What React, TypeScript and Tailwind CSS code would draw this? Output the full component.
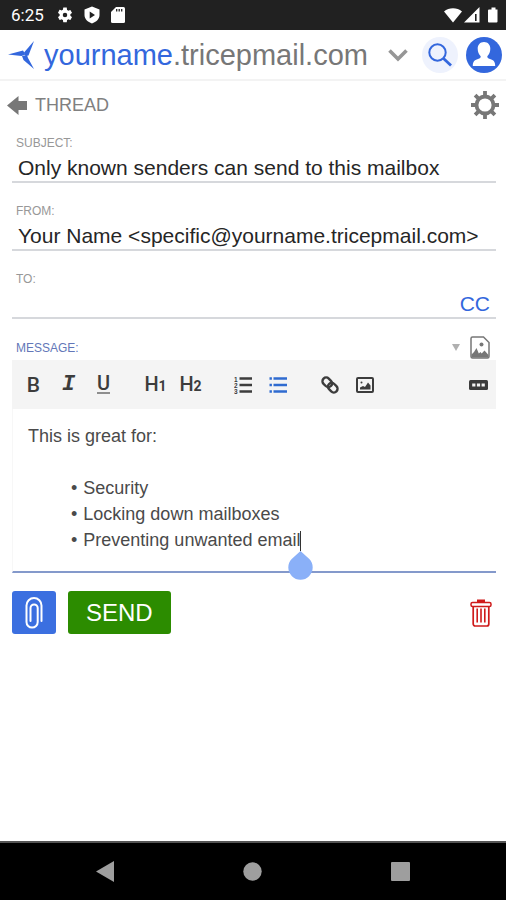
import React, { useState } from 'react';

interface FieldProps {
    id: string;
    label: string;
    value: string;
    onChange: (value: string) => void;
    children?: React.ReactNode;
}

const Field: React.FC<FieldProps> = ({ id, label, value, onChange, children }) => {
    return (
        <div>
            <label htmlFor={id} className="block h-4 pl-1 text-[12px] leading-4 text-[#989898]">{label}</label>
            <div className="flex h-8 items-center border-b-2 border-[#d6d8dc] pt-1">
                <input
                    id={id}
                    type="text"
                    value={value}
                    onChange={(e) => onChange(e.target.value)}
                    className="min-w-0 flex-1 bg-transparent pl-1.5 text-[21px] leading-7 text-[#262626] outline-none"
                />
                {children}
            </div>
        </div>
    );
};

interface ToolButtonProps {
    label: string;
    children: React.ReactNode;
}

const ToolButton: React.FC<ToolButtonProps> = ({ label, children }) => (
    <button type="button" aria-label={label} className="flex h-9 w-[35px] items-center justify-center text-[#3c3c3c]">
        {children}
    </button>
);

const StatusBar = () => (
    <div className="flex h-[30px] items-center bg-[#212121] pl-[11px] pr-2 text-white">
        <span className="font-[Roboto,sans-serif] text-[17px] leading-5">6:25</span>
        <div className="ml-3 flex items-center gap-2.5">
            <svg className="h-[18px] w-[18px]" viewBox="0 0 24 24" fill="currentColor">
                <path d="M19.14 12.94c.04-.3.06-.61.06-.94s-.02-.64-.07-.94l2.03-1.58a.49.49 0 0 0 .12-.61l-1.92-3.32a.49.49 0 0 0-.59-.22l-2.39.96a7 7 0 0 0-1.62-.94l-.36-2.54A.48.48 0 0 0 13.92 2h-3.84a.48.48 0 0 0-.47.41l-.36 2.54c-.59.24-1.13.57-1.62.94l-2.39-.96a.48.48 0 0 0-.59.22L2.74 8.87a.48.48 0 0 0 .12.61l2.03 1.58c-.05.3-.09.63-.09.94s.02.64.07.94l-2.03 1.58a.49.49 0 0 0-.12.61l1.92 3.32c.12.22.37.29.59.22l2.39-.96c.5.38 1.03.7 1.62.94l.36 2.54c.05.24.24.41.48.41h3.84c.24 0 .44-.17.47-.41l.36-2.54c.59-.24 1.13-.56 1.62-.94l2.39.96c.22.08.47 0 .59-.22l1.92-3.32a.48.48 0 0 0-.12-.61zM12 15a3 3 0 1 1 0-6 3 3 0 0 1 0 6z" />
            </svg>
            <svg className="h-[18px] w-4" viewBox="0 0 16 18" fillRule="evenodd" fill="currentColor">
                <path d="M8 .5l7.500 3v5.500c0 4-3.200 7-7.500 8.500C3.700 16 .5 13 .5 9V3.500zM5.700 5.500v7l5.300-3.500z" />
            </svg>
            <svg className="h-[18px] w-4" viewBox="0 0 16 18">
                <path d="M6 1h7.500A1.500 1.500 0 0 1 15 2.500v13a1.500 1.500 0 0 1-1.500 1.500h-11A1.500 1.500 0 0 1 1 15.500V6z" fill="currentColor" />
                <path d="M6.700 3v2.500M9.200 3v2.500M11.700 3v2.500" stroke="#212121" strokeWidth="1.300" />
            </svg>
        </div>
        <div className="ml-auto flex items-center gap-1.5">
            <svg className="h-4 w-[54px]" viewBox="0 0 54 16" fill="currentColor">
                <path d="M0 4.500C5 .300 13 .300 18 4.500L9 15.500z" />
                <path d="M35.500 0v15.500H20z" />
                <path d="M31.800 7v7" stroke="#212121" strokeWidth="1.600" />
                <path d="M45.500 2.500h2V.500h4v2h2v12a1 1 0 0 1-1 1h-7.500a1 1 0 0 1-1-1v-11a1 1 0 0 1 1-1z" />
            </svg>
        </div>
    </div>
);

const Header = () => (
    <header className="flex h-[51px] items-center border-b-2 border-[#f3f3f3] pl-2 pr-1">
        <svg className="h-7 w-7 shrink-0" viewBox="0 0 28 28" fill="#3367dd">
            <path d="M0 13.500L15 9.500l2.500 4-4 1.500z" />
            <path d="M26 0L20.500 14.500l-3 .5-1.500-3.500z" />
            <path d="M14 15l5-1 1 3L26 28 15.500 19z" />
        </svg>
        <h1 className="ml-2 text-[29px] leading-9 text-[#777]">
            <span className="text-[#3367dd]">yourname</span>.tricepmail.com
        </h1>
        <button type="button" aria-label="Switch mailbox" className="ml-auto mr-3.5 shrink-0">
            <svg className="h-4 w-5" viewBox="0 0 20 16" fill="none" stroke="#969696" strokeWidth="3.600">
                <path d="M1.500 3.500L10 12l8.500-8.500" />
            </svg>
        </button>
        <div className="flex shrink-0 gap-2">
            <button type="button" aria-label="Search" className="flex h-9 w-9 items-center justify-center rounded-full bg-[#eef2fd]">
                <svg className="h-6 w-6" viewBox="0 0 24 24" fill="none" stroke="#3367dd">
                    <circle cx="9.500" cy="9.500" r="8.200" strokeWidth="2" />
                    <path d="M15.500 15.500l7.500 7" strokeWidth="2.800" />
                </svg>
            </button>
            <button type="button" aria-label="Account" className="h-9 w-9">
                <svg className="h-9 w-9" viewBox="0 0 36 36">
                    <circle cx="18" cy="18" r="18" fill="#3367dd" />
                    <path d="M18 5c4 0 6.300 2.800 6.300 6.800 0 3-1.200 5.800-3 7.500 0 1.700.7 2.200 2.700 2.800 3.700 1 5.200 2.700 5.200 6.900H6.800c0-4.200 1.500-5.900 5.200-6.900 2-.6 2.700-1.100 2.700-2.800-1.800-1.700-3-4.500-3-7.500C11.700 7.800 14 5 18 5z" fill="#fff" />
                </svg>
            </button>
        </div>
    </header>
);

const Toolbar = () => (
    <div role="toolbar" aria-label="Formatting" className="flex h-[49px] items-center gap-[17px] bg-[#f4f4f4] pl-1">
        <div className="flex">
            <ToolButton label="Bold">
                <span className="font-[Roboto,sans-serif] text-[21px] leading-6 font-medium">B</span>
            </ToolButton>
            <ToolButton label="Italic">
                <span className="font-['Liberation_Mono',monospace] text-[22px] leading-6 font-bold italic">I</span>
            </ToolButton>
            <ToolButton label="Underline">
                <span className="border-b-2 border-[#8e8e8e] font-[Roboto,sans-serif] text-[20px] leading-[17px] font-medium">U</span>
            </ToolButton>
        </div>
        <div className="flex">
            <ToolButton label="Heading 1">
                <span className="flex items-baseline font-[Roboto,sans-serif] text-[20px] leading-6 font-medium">
                    H<span className="text-[14px] font-bold">1</span>
                </span>
            </ToolButton>
            <ToolButton label="Heading 2">
                <span className="flex items-baseline font-[Roboto,sans-serif] text-[20px] leading-6 font-medium">
                    H<span className="text-[14px] font-bold">2</span>
                </span>
            </ToolButton>
        </div>
        <div className="flex">
            <ToolButton label="Numbered list">
                <svg className="h-[18px] w-[18px]" viewBox="0 0 18 18" fill="currentColor">
                    <path d="M5.500 2.500H18M5.500 9H18M5.500 15.500H18" stroke="currentColor" strokeWidth="2.400" />
                    <text x="0" y="5.500" fontSize="6.500" fontWeight="bold">1</text>
                    <text x="0" y="11.500" fontSize="6.500" fontWeight="bold">2</text>
                    <text x="0" y="17.800" fontSize="6.500" fontWeight="bold">3</text>
                </svg>
            </ToolButton>
            <ToolButton label="Bulleted list">
                <svg className="h-[18px] w-[18px]" viewBox="0 0 18 18" stroke="#2f6bd0" strokeWidth="2.400">
                    <path d="M4.500 2.500H18M4.500 9H18M4.500 15.500H18M.500 2.500h2.400M.500 9h2.400M.500 15.500h2.400" />
                </svg>
            </ToolButton>
        </div>
        <div className="flex">
            <ToolButton label="Link">
                <svg className="h-[18px] w-[18px]" viewBox="0 0 18 18" fill="none" stroke="currentColor" strokeWidth="2.400">
                    <rect x="1" y="2.600" width="10.500" height="7.400" rx="3.700" transform="rotate(45 6.250 6.300)" />
                    <rect x="6.500" y="8" width="10.500" height="7.400" rx="3.700" transform="rotate(45 11.750 11.700)" />
                </svg>
            </ToolButton>
            <ToolButton label="Image">
                <svg className="h-[18px] w-[18px]" viewBox="0 0 18 18">
                    <rect x="1" y="2" width="16" height="14" rx="1" fill="none" stroke="currentColor" strokeWidth="2" />
                    <path d="M4 13.500v-2l3-1.500 2 1 3-4.500 2.500 3v4z" fill="currentColor" />
                    <circle cx="5.500" cy="6.500" r="1" fill="currentColor" />
                </svg>
            </ToolButton>
        </div>
        <div className="ml-auto flex">
            <ToolButton label="More">
                <svg className="h-[10px] w-[19px]" viewBox="0 0 19 10">
                    <rect width="19" height="10" rx="1.500" fill="currentColor" />
                    <path d="M3.200 3.500h3.200v3H3.200zM7.900 3.500h3.200v3H7.900zM12.600 3.500h3.200v3h-3.200z" fill="#f4f4f4" />
                </svg>
            </ToolButton>
        </div>
    </div>
);

const benefits = ['Security', 'Locking down mailboxes', 'Preventing unwanted email'];

const Editor = () => (
    <div
        role="textbox"
        aria-multiline="true"
        aria-labelledby="message-label"
        contentEditable
        suppressContentEditableWarning
        className="border-b-2 border-l border-b-[#8499cb] border-l-[#f7f7f7] px-[15px] pt-3.5 pb-[18px] text-[18px] leading-[26px] text-[#4a4a4a] outline-none"
    >
        <p>This is great for:</p>
        <p><br /></p>
        <ul className="pl-[43px]">
            {benefits.map((item, i) => (
                <li key={item} className="flex gap-1.5">
                    <span>•</span>
                    <span className="relative">
                        {item}
                        {i === benefits.length - 1 && (
                            <span contentEditable={false} className="absolute top-1 left-full">
                                <span className="block h-5 w-px bg-[#333]" />
                                <svg className="absolute top-5 -left-3 h-[29px] w-[25px]" viewBox="0 0 25 29">
                                    <path d="M12.500 0l8.800 8A12.200 12.200 0 1 1 3.700 8z" fill="#8ab0f8" />
                                </svg>
                            </span>
                        )}
                    </span>
                </li>
            ))}
        </ul>
    </div>
);

const NavBar = () => (
    <nav className="mt-auto flex h-[59px] items-center justify-around border-t-2 border-[#555] bg-black px-8">
        <button type="button" aria-label="Back">
            <svg className="h-[21px] w-[19px]" viewBox="0 0 19 21" fill="#9e9e9e"><path d="M0 10.500L18 0v21z" /></svg>
        </button>
        <button type="button" aria-label="Home">
            <svg className="h-[19px] w-[19px]" viewBox="0 0 19 19" fill="#9e9e9e"><circle cx="9.500" cy="9.500" r="9.200" /></svg>
        </button>
        <button type="button" aria-label="Recent apps">
            <svg className="h-[19px] w-[19px]" viewBox="0 0 19 19" fill="#9e9e9e"><rect width="19" height="19" rx="1" /></svg>
        </button>
    </nav>
);

export default function App() {
    const [subject, setSubject] = useState('Only known senders can send to this mailbox');
    const [from, setFrom] = useState('Your Name <specific@yourname.tricepmail.com>');
    const [to, setTo] = useState('');

    return (
        <div className="flex min-h-screen flex-col bg-white font-['Liberation_Sans',Arial,sans-serif]">
            <StatusBar />
            <Header />

            <div className="flex h-12 items-center justify-between pl-[7px] pr-[7px]">
                <button type="button" className="flex items-center gap-2 text-[18px] leading-6 text-[#808080]">
                    <svg className="h-[19px] w-5" viewBox="0 0 20 19" fill="#777"><path d="M0 9.500L11.500 0v5H20v9h-8.500v5z" /></svg>
                    THREAD
                </button>
                <button type="button" aria-label="Settings">
                    <svg className="h-7 w-7" viewBox="0 0 28 28" fill="none" stroke="#777">
                        <circle cx="14" cy="14" r="8.500" strokeWidth="3.800" />
                        <path d="M14 0v5M14 23v5M0 14h5M23 14h5M4.100 4.100l3.500 3.500M20.400 20.400l3.500 3.500M4.100 23.900l3.500-3.500M20.400 7.600l3.500-3.500" strokeWidth="3.800" />
                    </svg>
                </button>
            </div>

            <form className="pt-1.5 pr-2.5 pl-3" onSubmit={(e) => e.preventDefault()}>
                <div className="flex flex-col gap-5">
                    <Field id="subject" label="SUBJECT:" value={subject} onChange={setSubject} />
                    <Field id="from" label="FROM:" value={from} onChange={setFrom} />
                    <Field id="to" label="TO:" value={to} onChange={setTo}>
                        <button type="button" className="px-1.5 text-[21px] leading-7 text-[#3367dd]">CC</button>
                    </Field>
                </div>

                <div className="mt-4 flex h-[25px] items-center pr-1.5 pl-1">
                    <span id="message-label" className="text-[12px] leading-4 text-[#6377b8]">MESSAGE:</span>
                    <button type="button" aria-label="Insert picture" className="ml-auto flex items-center gap-2.5">
                        <svg className="h-[7px] w-2" viewBox="0 0 8 7" fill="#b0b0b0"><path d="M0 0h8L4 7z" /></svg>
                        <svg className="h-[23px] w-5" viewBox="0 0 20 23">
                            <path d="M2.500 1h11L19 6.500v14a1.500 1.500 0 0 1-1.500 1.500h-15A1.500 1.500 0 0 1 1 20.500v-18A1.500 1.500 0 0 1 2.500 1z" fill="none" stroke="#777" strokeWidth="1.500" />
                            <path d="M1.500 21.500v-3L4 16l2.500-4 2.300 5.500L10.500 16l1.200 1.500 2.800-3 4 4.500v2.500z" fill="#777" />
                            <circle cx="11.500" cy="8.500" r="2" fill="#777" />
                        </svg>
                    </button>
                </div>
                <Toolbar />
                <Editor />

                <div className="mt-[18px] flex items-center gap-3">
                    <button type="button" aria-label="Attach file" className="flex h-[43px] w-11 items-center justify-center rounded-[3px] bg-[#3b6fe0]">
                        <svg className="h-8 w-[18px]" viewBox="0 0 18 32" fill="none" stroke="#fff" strokeWidth="2" strokeLinecap="round">
                            <path d="M16.500 24V8.500a7.500 7.500 0 0 0-15 0V25a5.600 5.600 0 0 0 11.200 0V11a3.600 3.600 0 0 0-7.200 0v13" />
                        </svg>
                    </button>
                    <button type="submit" className="h-[43px] rounded-[3px] bg-[#2c8c00] px-[18px] text-[24px] leading-7 text-white">SEND</button>
                    <button type="button" aria-label="Delete draft" className="mr-1 ml-auto">
                        <svg className="h-7 w-[22px]" viewBox="0 0 22 28" fill="none" stroke="#cf1b1b">
                            <rect x="1" y="3.500" width="20" height="4" rx="1.500" strokeWidth="1.500" />
                            <path d="M7 2h8" strokeWidth="3" />
                            <path d="M3.200 8v17a2 2 0 0 0 2 2h11.600a2 2 0 0 0 2-2V8" strokeWidth="1.700" />
                            <path d="M7.200 9.500v14M11 9.500v14M14.800 9.500v14" strokeWidth="1.600" />
                        </svg>
                    </button>
                </div>
            </form>

            <NavBar />
        </div>
    );
}
